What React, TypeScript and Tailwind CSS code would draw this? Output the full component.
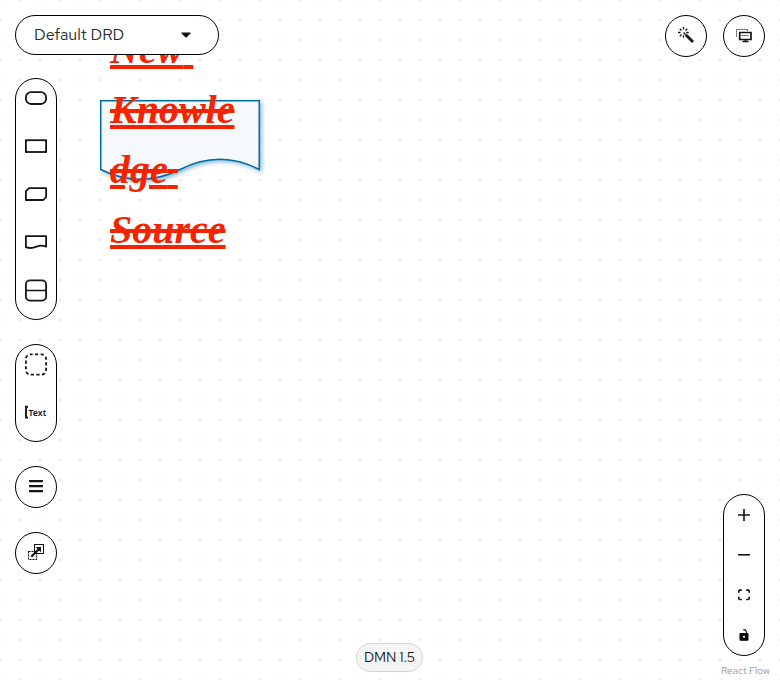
import type { ReactNode } from "react";

function Pill({ children, className = "" }: { children: ReactNode; className?: string }) {
  return (
    <div className={`flex w-[42px] flex-col items-center rounded-full border border-black bg-white ${className}`}>
      {children}
    </div>
  );
}

const cell = "flex h-12 w-10 shrink-0 items-center justify-center";

function Shape({ d, children }: { d?: string; children?: ReactNode }) {
  return (
    <svg width="24" height="24" viewBox="0 0 24 24" fill="none" stroke="#151515" strokeWidth="1.8" strokeLinejoin="round">
      {d && <path d={d} />}
      {children}
    </svg>
  );
}

function Palette() {
  return (
    <div className="flex w-[42px] flex-col">
      <Pill className="mt-[23px] h-[242px] overflow-hidden">
        <div className="-mt-[5px]">
          <div className={cell}><Shape><rect x="1.9" y="6.2" width="20.2" height="11.8" rx="5.2" /></Shape></div>
          <div className={cell}><Shape><rect x="1.9" y="6.2" width="20.2" height="11.8" strokeLinejoin="miter" /></Shape></div>
          <div className={cell}><Shape d="M5 6.2H22.1V15L19.3 18H1.9V9.2Z" /></div>
          <div className={cell}><Shape d="M1.9 6.2H22.1V16.7Q17 14.4 12.5 16.7Q7 19 1.9 17.2Z" /></div>
          <div className={cell}><Shape><rect x="1.9" y="2.4" width="20.2" height="20.2" rx="4" /><path d="M2 12.5H22" strokeWidth="1.5" /></Shape></div>
        </div>
      </Pill>
      <Pill className="mt-6 h-[98px]">
        <div className="-mt-[5px]">
          <div className={cell}><Shape><rect x="1.9" y="2.4" width="20.2" height="20.2" rx="4.5" strokeDasharray="3.2 2.4" strokeDashoffset="1" /></Shape></div>
          <div className={cell}>
            <svg width="24" height="24" viewBox="0 0 24 24">
              <path d="M4 6.8H2V17.6H4" fill="none" stroke="#151515" strokeWidth="1.9" />
              <text x="4.5" y="16" fontSize="9.5" fontWeight="600" textLength="17.8" lengthAdjust="spacingAndGlyphs" fill="#151515" className="font-['Noto_Sans',sans-serif]">Text</text>
            </svg>
          </div>
        </div>
      </Pill>
      <Pill className="mt-6 h-[42px] justify-center">
        <svg className="mb-0.5" width="14" height="14" viewBox="0 0 14 14" fill="#151515"><path d="M0 1H14V3.3H0ZM0 6H14V8.3H0ZM0 11H14V13.3H0Z" /></svg>
      </Pill>
      <Pill className="mt-6 h-[42px] justify-center">
        <svg className="mb-0.5" width="16" height="16" viewBox="0 0 16 16" fill="none" stroke="#151515">
          <path d="M6.5 .5H15.5V9.5H6.5Z" strokeWidth="1.1" />
          <path d="M.5 7.5H8.5V15.5H.5Z" strokeDasharray="2 1" strokeWidth="1.2" />
          <path d="M3.3 12.7L11.5 4.5" strokeWidth="2.2" />
          <path d="M7.6 3H13V8.4Z" fill="#151515" stroke="none" />
        </svg>
      </Pill>
    </div>
  );
}

function KnowledgeSourceNode() {
  return (
    <div className="absolute left-[100px] top-[100px] h-20 w-40">
      <svg className="absolute inset-0 overflow-visible drop-shadow-[2px_2px_2px_rgba(0,107,164,0.45)]" width="160" height="80">
        <path d="M.75 .75H159.25V69.5Q120 49 80 69.5Q40 89 .75 69.5Z" fill="#f5f9fc" stroke="#006ba4" strokeWidth="1.5" />
      </svg>
      <div className="absolute -top-20 left-[10px] w-[140px] whitespace-pre-wrap break-words font-['Liberation_Serif',serif] text-[40px] font-bold italic leading-[60px] text-[#f52300] [text-decoration-line:underline_line-through] decoration-4">
        New Knowledge Source
      </div>
    </div>
  );
}

function Controls() {
  const button = "flex h-10 w-10 items-center justify-center";
  return (
    <Pill className="h-[162px]">
      <div className={button}><svg width="12" height="12" viewBox="0 0 12 12"><path d="M0 6H12M6 0V12" stroke="#151515" strokeWidth="1.6" /></svg></div>
      <div className={button}><svg width="12" height="12" viewBox="0 0 12 12"><path d="M0 5.8H12" stroke="#151515" strokeWidth="1.6" /></svg></div>
      <div className={button}><svg width="12" height="12" viewBox="0 0 12 12"><path d="M.8 3.8V2.1Q.8 1.1 1.8 1.1H3.8M8.2 1.1H10.2Q11.2 1.1 11.2 2.1V3.8M11.2 7.8V9.5Q11.2 10.5 10.2 10.5H8.2M3.8 10.5H1.8Q.8 10.5 .8 9.5V7.8" fill="none" stroke="#151515" strokeWidth="1.6" /></svg></div>
      <div className={button}><svg width="10" height="12" viewBox="0 0 10 12"><path d="M4.3 .7Q7.5 .3 7.7 4.5" fill="none" stroke="#000" strokeWidth="1.1" /><rect x=".5" y="4" width="9" height="7.8" rx="1" /><circle cx="5" cy="7.8" r="1.1" fill="#fff" /></svg></div>
    </Pill>
  );
}

export default function App() {
  return (
    <div className="relative h-[680px] w-[780px] overflow-hidden bg-white font-['Red_Hat_Text','Noto_Sans',sans-serif] text-[#151515]">
      <svg className="absolute inset-0" width="780" height="680">
        <defs>
          <pattern id="dots" x="-10" y="-10" width="20" height="20" patternUnits="userSpaceOnUse"><circle cx="10" cy="10" r="1" fill="#e0e0e0" /></pattern>
        </defs>
        <rect width="780" height="680" fill="url(#dots)" />
      </svg>
      <KnowledgeSourceNode />
      <div className="relative flex h-full justify-between p-[15px]">
        <div className="flex flex-col">
          <div className="flex h-10 w-[204px] items-center justify-between rounded-full border border-black bg-white pl-[18px] pr-[27px]">
            <span className="whitespace-nowrap text-base leading-6 text-[#2c2c2c]">Default DRD</span>
            <svg width="10" height="6" viewBox="0 0 10 6"><path d="M.8 .5H9.2Q10.3 .7 9.5 1.5L5.7 5.3Q5 6 4.3 5.3L.5 1.5Q-.3 .7 .8 .5Z" fill="#151515" /></svg>
          </div>
          <Palette />
        </div>
        <div className="flex flex-col items-end justify-between">
          <div className="flex gap-4">
            <Pill className="h-[42px] justify-center">
              <svg className="-mt-px" width="17" height="17" viewBox="0 0 17 17" fill="none" stroke="#151515">
                <path d="M8 8L15 15" strokeWidth="2.9" />
                <path d="M5.5 5.5L8 8" strokeWidth="1.4" />
                <path d="M5.5 0V2.5M0 5.5H2.5M8.2 5.5H10.7M5.5 8.2V10.7M1.8 1.8L3.5 3.5M9.2 1.8L7.5 3.5M1.8 9.2L3.5 7.5" strokeWidth="1.3" />
              </svg>
            </Pill>
            <Pill className="h-[42px] justify-center">
              <svg className="-mt-px" width="16" height="16" viewBox="0 0 16 16" fill="none" stroke="#151515">
                <path d="M.5 8.5V1.5H11.5V3.5" strokeDasharray="1.2 .8" />
                <path d="M3.7 4.5H15V11.5H3.7Z" strokeWidth="1.7" />
                <path d="M5.5 7.5H12.5" strokeDasharray="1.2 .8" />
                <path d="M9.5 11.5V13.5M6.5 13.5H12.5" strokeWidth="1.5" />
              </svg>
            </Pill>
          </div>
          <div className="mb-[9px]"><Controls /></div>
        </div>
      </div>
      <div className="absolute bottom-2 left-[356px] flex h-[29px] w-[67px] items-center justify-center rounded-full border border-[#d2d2d2] bg-[#f5f5f5]">
        <span className="-mt-px whitespace-nowrap text-sm leading-5 tracking-[-0.1px]">DMN 1.5</span>
      </div>
      <div className="absolute bottom-[2px] right-[10px] whitespace-nowrap text-[10px] leading-[15px] text-[#999]">React Flow</div>
    </div>
  );
}
